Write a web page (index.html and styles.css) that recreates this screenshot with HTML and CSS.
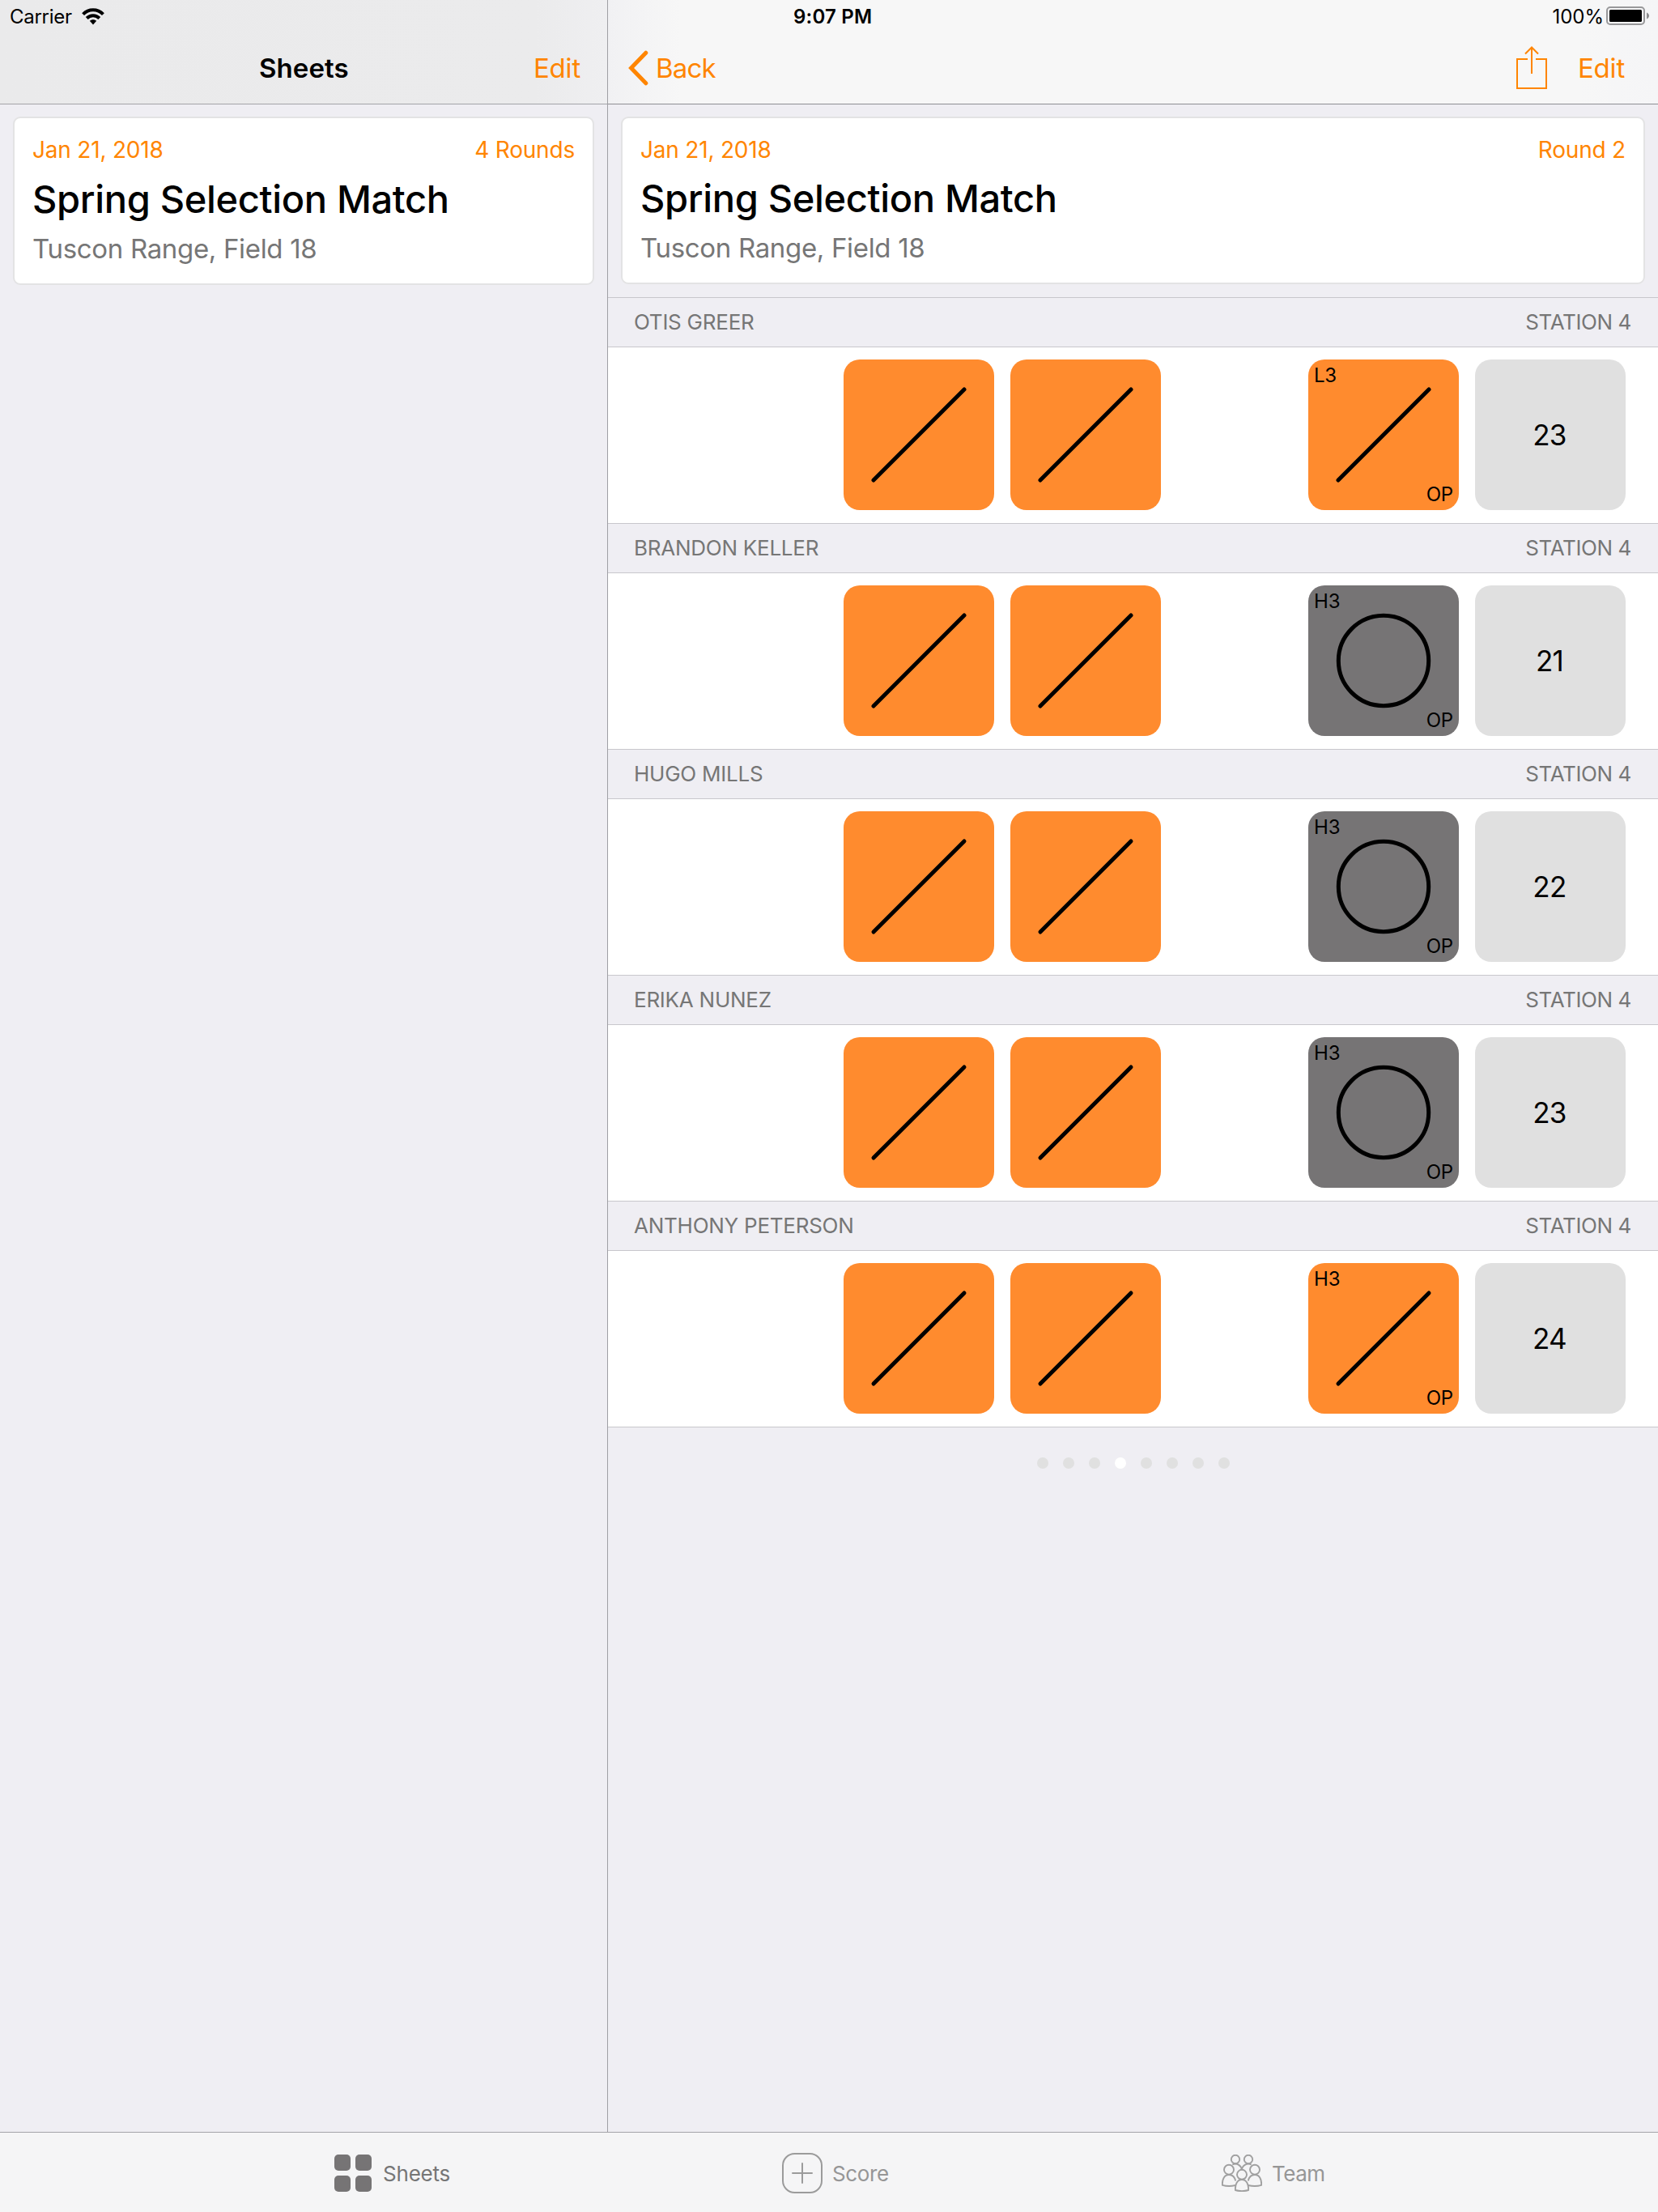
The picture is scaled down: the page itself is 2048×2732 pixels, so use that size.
FILE: index.html
```html
<!DOCTYPE html>
<html lang="en">
<head>
<meta charset="utf-8">
<title>Sheets</title>
<link rel="stylesheet" href="styles.css">
</head>
<body>
<svg class="defs" width="0" height="0">
  <symbol id="hit" viewBox="0 0 186 186"><path d="M37 149L149 37" fill="none" stroke="#000" stroke-width="5" stroke-linecap="round"/></symbol>
  <symbol id="miss" viewBox="0 0 186 186"><circle cx="93" cy="93" r="55.7" fill="none" stroke="#000" stroke-width="5"/></symbol>
</svg>
<div class="app">
  <div class="split">
    <aside class="master">
      <header class="bar bar-master">
        <div class="status">
          <span class="carrier">Carrier</span>
          <svg class="wifi" width="28" height="21" viewBox="0 0 28 21">
            <g fill="none" stroke="#000" stroke-width="4">
              <path d="M1.6 7.6C8.4 .5 19.6 .5 26.4 7.6"/>
              <path d="M6.2 12.5C10.6 8 17.4 8 21.8 12.5"/>
            </g>
            <path d="M9.8 15.8C12.2 13.6 15.8 13.6 18.2 15.8L14 20.4Z"/>
          </svg>
        </div>
        <div class="nav">
          <h1 class="nav-title">Sheets</h1>
          <a class="link">Edit</a>
        </div>
      </header>
      <div class="card card-master">
        <div class="meta"><span>Jan 21, 2018</span><span>4 Rounds</span></div>
        <h2 class="match">Spring Selection Match</h2>
        <p class="place">Tuscon Range, Field 18</p>
      </div>
    </aside>
    <main class="detail">
      <header class="bar bar-detail">
        <div class="status">
          <span class="time">9:07 PM</span>
          <span class="percent">100%</span>
          <svg class="battery" width="54" height="24" viewBox="0 0 54 24">
            <rect x="1" y="1" width="46" height="21" rx="4" fill="none" stroke="#98989a" stroke-width="2"/>
            <rect x="4" y="4" width="40" height="15" rx="1.5"/>
            <path d="M50 7.5C54 9 54 14 50 15.5Z" fill="#8c8c8e"/>
          </svg>
        </div>
        <div class="nav">
          <a class="link back">
            <svg width="26" height="44" viewBox="0 0 26 44"><path d="M21.8 3.2L3.6 22L21.8 40.8" fill="none" stroke="#ff8500" stroke-width="5" stroke-linecap="round" stroke-linejoin="miter"/></svg>
            <span>Back</span>
          </a>
          <svg class="share" width="38" height="54" viewBox="0 0 38 54">
            <path d="M14 16H1V52H37V16H24M19 34V2M11 9.5L19 1.5L27 9.5" fill="none" stroke="#ff8500" stroke-width="2"/>
          </svg>
          <a class="link">Edit</a>
        </div>
      </header>
      <div class="card card-detail">
        <div class="meta"><span>Jan 21, 2018</span><span>Round 2</span></div>
        <h2 class="match">Spring Selection Match</h2>
        <p class="place">Tuscon Range, Field 18</p>
      </div>
      <section class="shooter">
        <div class="head"><span>OTIS GREER</span><span class="station">STATION 4</span></div>
        <div class="row">
          <div class="tile orange"><svg><use href="#hit"/></svg></div>
          <div class="tile orange"><svg><use href="#hit"/></svg></div>
          <div class="tile orange last"><svg><use href="#hit"/></svg><span class="tag house">L3</span><span class="tag op">OP</span></div>
          <div class="tile total">23</div>
        </div>
      </section>
      <section class="shooter">
        <div class="head"><span>BRANDON KELLER</span><span class="station">STATION 4</span></div>
        <div class="row">
          <div class="tile orange"><svg><use href="#hit"/></svg></div>
          <div class="tile orange"><svg><use href="#hit"/></svg></div>
          <div class="tile gray last"><svg><use href="#miss"/></svg><span class="tag house">H3</span><span class="tag op">OP</span></div>
          <div class="tile total">21</div>
        </div>
      </section>
      <section class="shooter">
        <div class="head"><span>HUGO MILLS</span><span class="station">STATION 4</span></div>
        <div class="row">
          <div class="tile orange"><svg><use href="#hit"/></svg></div>
          <div class="tile orange"><svg><use href="#hit"/></svg></div>
          <div class="tile gray last"><svg><use href="#miss"/></svg><span class="tag house">H3</span><span class="tag op">OP</span></div>
          <div class="tile total">22</div>
        </div>
      </section>
      <section class="shooter">
        <div class="head"><span>ERIKA NUNEZ</span><span class="station">STATION 4</span></div>
        <div class="row">
          <div class="tile orange"><svg><use href="#hit"/></svg></div>
          <div class="tile orange"><svg><use href="#hit"/></svg></div>
          <div class="tile gray last"><svg><use href="#miss"/></svg><span class="tag house">H3</span><span class="tag op">OP</span></div>
          <div class="tile total">23</div>
        </div>
      </section>
      <section class="shooter">
        <div class="head"><span>ANTHONY PETERSON</span><span class="station">STATION 4</span></div>
        <div class="row">
          <div class="tile orange"><svg><use href="#hit"/></svg></div>
          <div class="tile orange"><svg><use href="#hit"/></svg></div>
          <div class="tile orange last"><svg><use href="#hit"/></svg><span class="tag house">H3</span><span class="tag op">OP</span></div>
          <div class="tile total">24</div>
        </div>
      </section>
      <div class="pager"><i></i><i></i><i></i><i class="on"></i><i></i><i></i><i></i><i></i></div>
    </main>
  </div>
  <nav class="tabs">
    <a class="tab tab-sheets active">
      <svg width="46" height="46" viewBox="0 0 46 46" fill="#767475"><rect width="20" height="20" rx="5"/><rect x="26" width="20" height="20" rx="5"/><rect y="26" width="20" height="20" rx="5"/><rect x="26" y="26" width="20" height="20" rx="5"/></svg>
      <span>Sheets</span>
    </a>
    <a class="tab tab-score">
      <svg width="50" height="50" viewBox="0 0 50 50" fill="none" stroke="#9b9b9b" stroke-width="2"><rect x="1" y="1" width="48" height="48" rx="14.5"/><path d="M13 25H37M25 13V37" stroke-linecap="round"/></svg>
      <span>Score</span>
    </a>
    <a class="tab tab-team">
      <svg width="50" height="46" viewBox="0 0 50 46" fill="none" stroke="#a0a0a0" stroke-width="1.9">
        <circle cx="17" cy="6" r="5.2"/><circle cx="33" cy="6" r="5.2"/>
        <path d="M13.3 12.5C18.5 9.8 24.3 13.5 24.9 18.8C25.5 13.5 31.5 9.8 36.7 12.5"/>
        <circle cx="9" cy="18.7" r="6"/><circle cx="41" cy="18.7" r="6"/><circle cx="25" cy="24.8" r="6"/>
        <path d="M17.2 38C12 39.2 5 39 1 37.8C.3 30.5 3.5 25 9 25C13.5 25 16.2 28 17.2 32.5"/>
        <path d="M32.8 38C38 39.2 45 39 49 37.8C49.7 30.5 46.5 25 41 25C36.5 25 33.8 28 32.8 32.5"/>
        <path d="M17 44C16.3 36.7 19.5 31 25 31C30.5 31 33.7 36.7 33 44C28 45.5 22 45.5 17 44Z"/>
      </svg>
      <span>Team</span>
    </a>
  </nav>
</div>
</body>
</html>
```
FILE: styles.css
```css
* { box-sizing: border-box; }
body {
  margin: 0;
  background: #efeef3;
  color: #000;
  font-family: Inter, "Liberation Sans", sans-serif;
  white-space: nowrap;
}
h1, h2, p { margin: 0; }
svg { display: block; flex: none; }
.defs { position: absolute; }

.app { display: flex; flex-direction: column; width: 2048px; height: 2732px; }
.split { display: flex; flex: 1; min-height: 0; }
.master { width: 751px; border-right: 1px solid #9f9fa4; }
.detail { flex: 1; }

/* Status and navigation bars */
.bar { height: 129px; border-bottom: 1px solid #a3a3a8; }
.bar-master { background: linear-gradient(90deg, #eaeaeb 0, #ebebec 660px, #efeff1 750px); }
.bar-detail {
  border-bottom-color: #8e8e93;
  background: linear-gradient(90deg, #f1f1f3 0, #f7f7f7 90px, #f7f7f7 1200px, #f5f5f7 1297px);
}
.status { display: flex; align-items: center; height: 40px; font-size: 24px; line-height: 38px; }
.status span { padding-top: 2px; }
.carrier { margin-left: 12px; letter-spacing: -0.27px; }
.wifi { margin-left: 12px; }
.time { margin-left: 229px; font-weight: 600; letter-spacing: 0.2px; }
.percent { margin-left: auto; }
.battery { margin: 0 10px 0 3px; }
.nav { display: flex; align-items: center; height: 88px; font-size: 33px; line-height: 88px; }
.nav-title { margin-left: 320px; font-size: 33px; font-weight: 600; letter-spacing: 0.1px; }
.link { color: #ff8500; letter-spacing: -0.2px; }
.nav-title + .link { margin-left: auto; margin-right: 33px; }
.back { display: flex; align-items: center; gap: 8px; margin-left: 25px; letter-spacing: -0.8px; }
.share { margin: 0 38px 0 auto; }
.share + .link { margin-right: 41px; }

/* Match cards */
.card { border: 2px solid #e3e3e4; border-radius: 9px; background: #fff; padding: 22px 22px 0; }
.card-master { margin: 15px 16px 0; height: 208px; }
.card-detail { margin: 15px 16px 0; height: 207px; }
.meta { display: flex; justify-content: space-between; font-size: 28px; line-height: 34px; letter-spacing: -0.2px; color: #ff8500; }
.match { margin-top: 16px; font-size: 47px; line-height: 56px; font-weight: 500; letter-spacing: -0.33px; }
.place { margin-top: 12px; font-size: 33px; line-height: 42px; letter-spacing: -0.33px; color: #767676; }
.card-detail .match { margin-top: 15px; }

/* Shooter sections */
.shooter { height: 279px; border-top: 1px solid #c8c7cc; }
.card + .shooter { margin-top: 16px; }
.head { display: flex; justify-content: space-between; padding: 0 33px 0 32px; height: 60px; font-size: 26px; line-height: 60px; letter-spacing: -0.25px; color: #767676; }
.station { letter-spacing: -0.4px; }
.row { display: flex; gap: 20px; height: 218px; padding: 15px 40px 0 291px; border-top: 1px solid #c8c7cc; background: #fff; }
.tile { position: relative; width: 186px; height: 186px; border-radius: 20px; }
.tile svg { width: 186px; height: 186px; }
.orange { background: #ff8b2e; }
.gray { background: #767475; }
.last { margin-left: auto; }
.total { padding-right: 2px; background: #e0e0e0; font-size: 35px; line-height: 187px; letter-spacing: -0.7px; text-align: center; }
.tag { position: absolute; font-size: 24px; line-height: 30px; letter-spacing: -0.2px; }
.house { left: 7px; top: 5px; }
.op { right: 7px; bottom: 4px; }
.pager { display: flex; justify-content: center; gap: 18px; padding-top: 37px; border-top: 1px solid #c8c7cc; }
.pager i { width: 14px; height: 14px; border-radius: 50%; background: #e0e0e0; }
.pager .on { background: #fff; }

/* Tab bar */
.tabs { display: flex; height: 99px; border-top: 1px solid #a3a3a8; background: #f5f5f6; font-size: 26px; letter-spacing: -0.35px; color: #969696; }
.tab { display: flex; align-items: center; height: 100px; }
.tab-sheets { width: 553px; margin-left: 413px; gap: 14px; color: #767676; letter-spacing: -0.2px; }
.tab-score { width: 543px; gap: 12px; }
.tab-team { gap: 12px; letter-spacing: -0.5px; }
```
